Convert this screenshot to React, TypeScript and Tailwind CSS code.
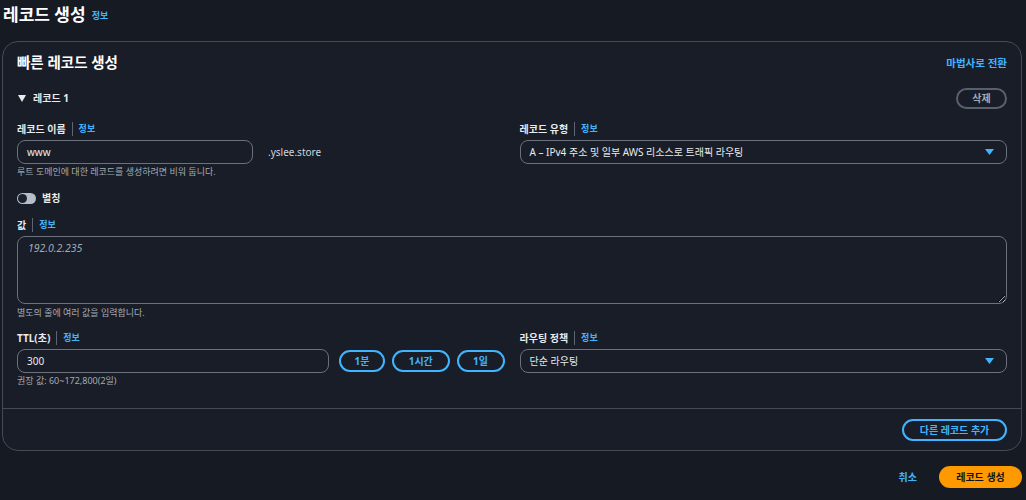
import type { ReactNode } from "react";

function Info() {
  return (
    <span className="flex items-center">
      <span className="mx-[6px] h-[14px] w-px bg-[#5f6570]" />
      <span className="text-[9px] font-bold text-[#42b4ff]">정보</span>
    </span>
  );
}

function FieldLabel({ children }: { children: ReactNode }) {
  return (
    <div className="flex h-[14px] items-center text-[10px] font-bold leading-[14px] text-[#e9ebed]">
      {children}
      <Info />
    </div>
  );
}

function Caret() {
  return (
    <svg width="9" height="6" viewBox="0 0 9 6" aria-hidden>
      <polygon points="0,0 9,0 4.5,6" fill="#42b4ff" />
    </svg>
  );
}

function SelectBox({ value }: { value: string }) {
  return (
    <div className="mt-[4px] flex h-[24px] items-center justify-between rounded-[8px] border border-[#6b717c] bg-[#181d28] pl-[9px] pr-[12px] text-[10px] text-[#e9ebed]">
      <span>{value}</span>
      <Caret />
    </div>
  );
}

function TextInput({ value, className }: { value: string; className?: string }) {
  return (
    <div
      className={[
        "flex h-[24px] items-center rounded-[8px] border border-[#6b717c] px-[9px] text-[10px] text-[#e9ebed]",
        className ?? "",
      ].join(" ")}
    >
      {value}
    </div>
  );
}

function Help({ children }: { children: ReactNode }) {
  return <p className="mt-[2px] h-[12px] text-[9px] leading-[12px] text-[#a4abb5]">{children}</p>;
}

function PillButton({ children, className }: { children: ReactNode; className?: string }) {
  return (
    <button
      className={[
        "flex h-[22px] items-center justify-center rounded-full border-2 border-[#42b4ff] text-[10px] font-bold text-[#42b4ff]",
        className ?? "",
      ].join(" ")}
    >
      {children}
    </button>
  );
}

export default function App() {
  return (
    <div className="min-h-[500px] w-[1026px] bg-[#161b23] font-['Noto_Sans','Noto_Sans_CJK_KR',sans-serif] text-[#e9ebed]">
      <div className="flex h-[41px] items-start pl-[3px] pt-[3px]">
        <h1 className="text-[17px] font-bold leading-[24px] text-white">레코드 생성</h1>
        <span className="ml-[6px] mt-[6px] text-[9px] font-bold leading-[14px] text-[#42b4ff]">정보</span>
      </div>

      <div className="ml-[2px] w-[1020px] rounded-[16px] border border-[#454a54] bg-[#181d28]">
        <div className="px-[14px] pb-[21px] pt-[10px]">
          <div className="flex h-[20px] items-center justify-between">
            <h2 className="text-[14.5px] font-bold leading-[20px] text-white">빠른 레코드 생성</h2>
            <span className="mt-[3px] text-[10.5px] font-bold text-[#42b4ff]">마법사로 전환</span>
          </div>

          <div className="mt-[16px] flex h-[21px] items-center justify-between">
            <div className="flex items-center gap-[7px] pl-[1px] text-[10px] font-bold text-[#e9ebed]">
              <svg width="8" height="7" viewBox="0 0 8 7" aria-hidden>
                <polygon points="0,0 8,0 4,7" fill="#e9ebed" />
              </svg>
              레코드 1
            </div>
            <button className="flex h-[21px] w-[51px] items-center justify-center rounded-full border-2 border-[#5a606b] text-[10px] font-bold text-[#a4abb5]">
              삭제
            </button>
          </div>

          <div className="mt-[13px] grid grid-cols-2 gap-x-[15px]">
            <div>
              <FieldLabel>레코드 이름</FieldLabel>
              <div className="mt-[4px] flex items-center">
                <TextInput value="www" className="w-[236px]" />
                <span className="ml-[15px] text-[10px] text-[#d1d5db]">.yslee.store</span>
              </div>
              <Help>루트 도메인에 대한 레코드를 생성하려면 비워 둡니다.</Help>
              <div className="mt-[12px] flex h-[16px] items-center gap-[6px]">
                <span className="flex h-[11px] w-[19px] items-center rounded-full bg-[#b6bec9] pl-[1px]">
                  <span className="h-[9px] w-[9px] rounded-full bg-[#1b212c]" />
                </span>
                <span className="text-[10px] font-bold text-[#e9ebed]">별칭</span>
              </div>
            </div>
            <div>
              <FieldLabel>레코드 유형</FieldLabel>
              <SelectBox value="A – IPv4 주소 및 일부 AWS 리소스로 트래픽 라우팅" />
            </div>
          </div>

          <div className="mt-[12px]">
            <FieldLabel>값</FieldLabel>
            <textarea
              placeholder="192.0.2.235"
              className="mt-[4px] block h-[68px] w-full resize-y rounded-[8px] border border-[#6b717c] bg-transparent px-[10px] py-[4px] text-[10.5px] leading-[15px] text-[#e9ebed] outline-none placeholder:italic placeholder:text-[#a4abb5]"
            />
            <p className="mt-[3px] h-[12px] text-[9px] leading-[12px] text-[#a4abb5]">별도의 줄에 여러 값을 입력합니다.</p>
          </div>

          <div className="mt-[12px] grid grid-cols-2 gap-x-[15px]">
            <div>
              <FieldLabel>TTL(초)</FieldLabel>
              <div className="mt-[4px] flex items-center">
                <TextInput value="300" className="w-[313px]" />
                <PillButton className="ml-[10px] w-[46px]">1분</PillButton>
                <PillButton className="ml-[7px] w-[58px]">1시간</PillButton>
                <PillButton className="ml-[7px] w-[48px]">1일</PillButton>
              </div>
              <Help>권장 값: 60~172,800(2일)</Help>
            </div>
            <div>
              <FieldLabel>라우팅 정책</FieldLabel>
              <SelectBox value="단순 라우팅" />
            </div>
          </div>
        </div>

        <div className="border-t border-[#454a54] px-[14px] pb-[9px] pt-[10px]">
          <div className="flex justify-end">
            <PillButton className="w-[105px]">다른 레코드 추가</PillButton>
          </div>
        </div>
      </div>

      <div className="mt-[15px] flex items-center justify-end pr-[4px]">
        <span className="mr-[22px] text-[10px] font-bold text-[#42b4ff]">취소</span>
        <button className="flex h-[22px] w-[83px] items-center justify-center rounded-full bg-[#ff9900] text-[10px] font-bold text-[#0f141a]">
          레코드 생성
        </button>
      </div>
    </div>
  );
}
